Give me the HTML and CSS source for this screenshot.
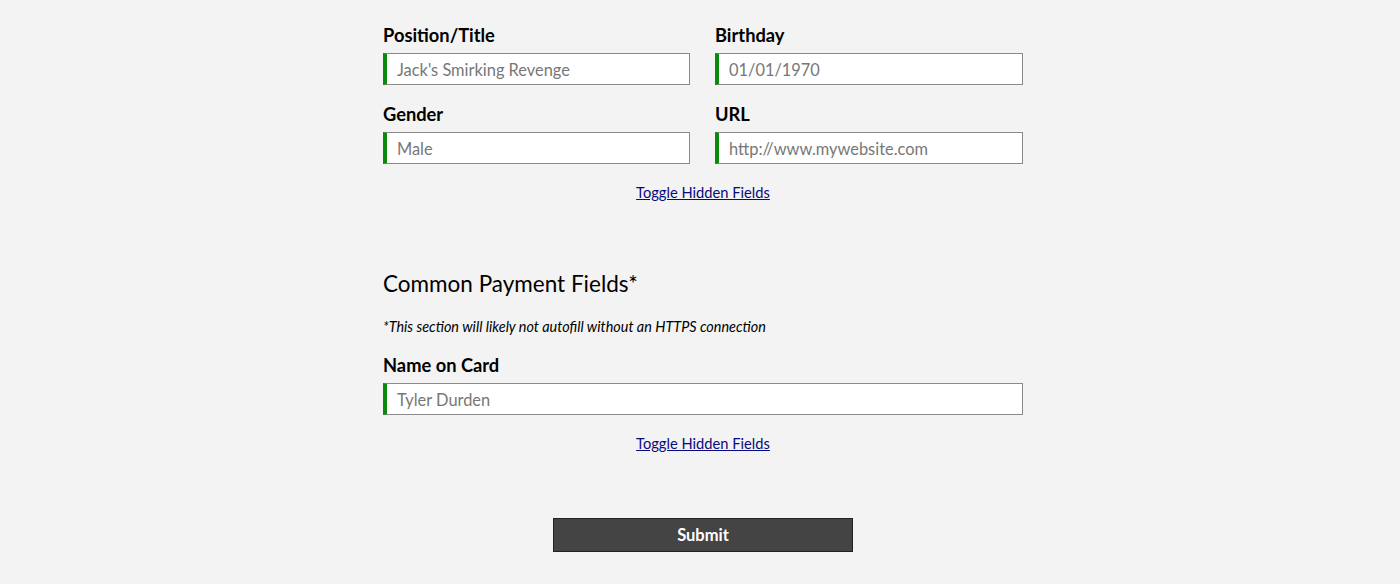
FILE: index.html
```html
<!DOCTYPE html>
<html>
<head>
<meta charset="utf-8">
<link rel="stylesheet" href="styles.css">
</head>
<body>
<div class="page">
  <form class="form">
    <div class="grid">
      <div class="field">
        <label class="label">Position/Title</label>
        <input class="input" type="text" placeholder="Jack's Smirking Revenge">
      </div>
      <div class="field">
        <label class="label">Birthday</label>
        <input class="input" type="text" placeholder="01/01/1970">
      </div>
      <div class="field">
        <label class="label">Gender</label>
        <input class="input" type="text" placeholder="Male">
      </div>
      <div class="field">
        <label class="label">URL</label>
        <input class="input" type="text" placeholder="http://www.mywebsite.com">
      </div>
    </div>
    <div class="toggle-row"><a class="toggle" href="#">Toggle Hidden Fields</a></div>

    <h2 class="heading">Common Payment Fields*</h2>
    <p class="note">*This section will likely not autofill without an HTTPS connection</p>
    <div class="field">
      <label class="label">Name on Card</label>
      <input class="input" type="text" placeholder="Tyler Durden">
    </div>
    <div class="toggle-row second"><a class="toggle" href="#">Toggle Hidden Fields</a></div>

    <div class="submit-row"><button class="submit" type="button">Submit</button></div>
  </form>
</div>
</body>
</html>
```

FILE: styles.css
```css
html, body {
  margin: 0;
  padding: 0;
  background: #f3f3f3;
}
body {
  font-family: "Lato", "Open Sans", sans-serif;
  color: #000;
}
.page {
  width: 646px;
  margin: 0 auto;
  padding: 25px 0 0 6px;
  box-sizing: border-box;
}
.form {
  display: block;
}
.grid {
  display: grid;
  grid-template-columns: 307px 308px;
  column-gap: 25px;
  row-gap: 19px;
}
.field {
  display: flex;
  flex-direction: column;
}
.label {
  font-size: 18.3px;
  font-weight: bold;
  line-height: 21px;
  margin-bottom: 7px;
}
.input {
  height: 32px;
  box-sizing: border-box;
  border: 1px solid #8a8a8a;
  border-left: 4px solid #0a8a0a;
  background: #fff;
  padding: 0 0 0 10px;
  font-family: inherit;
  font-size: 16.4px;
  color: #333;
  outline: none;
}
.input::placeholder {
  color: #777;
}
.toggle-row {
  text-align: center;
  margin-top: 19px;
  line-height: 18px;
}
.toggle {
  font-size: 14.7px;
  color: #0a0a80;
  text-decoration: underline;
}
.heading {
  font-size: 22.5px;
  font-weight: normal;
  line-height: 30px;
  margin: 68px 0 0 0;
}
.note {
  font-size: 14.4px;
  font-style: italic;
  line-height: 18px;
  margin: 19px 0 0 0;
}
.note + .field {
  margin-top: 19px;
}
.submit-row {
  display: flex;
  justify-content: center;
  margin-top: 66px;
}
.submit {
  width: 300px;
  height: 34px;
  background: #444;
  border: 1px solid #222;
  color: #fff;
  font-family: inherit;
  font-size: 16.5px;
  font-weight: bold;
  cursor: pointer;
}
```
